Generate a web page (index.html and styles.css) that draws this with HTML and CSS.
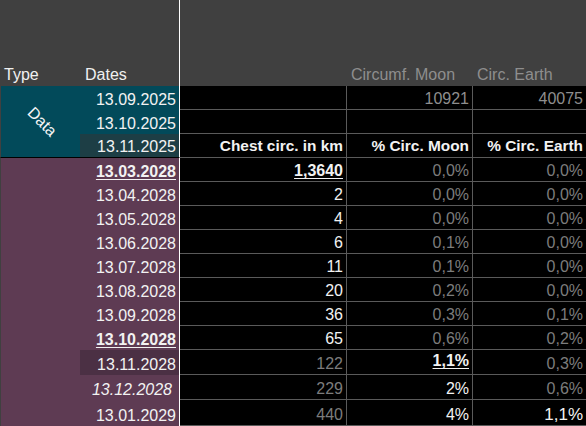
FILE: index.html
```html
<!DOCTYPE html>
<html>
<head>
<meta charset="utf-8">
<link rel="stylesheet" href="styles.css">
</head>
<body>
<div class="sheet">
  <div class="hd">Type</div>
  <div class="hd hd-date">Dates</div>
  <div class="hd"></div>
  <div class="hd hd-grey">Circumf. Moon</div>
  <div class="hd hd-grey">Circ. Earth</div>

  <div class="type type-data"><span class="rot">Data</span></div>
  <div class="type type-purple"></div>

  <div class="date teal">13.09.2025</div>
  <div class="v"></div>
  <div class="v grey">10921</div>
  <div class="v last grey">40075</div>

  <div class="date teal">13.10.2025</div>
  <div class="v"></div>
  <div class="v"></div>
  <div class="v last"></div>

  <div class="date teal-hi sep">13.11.2025</div>
  <div class="v bold">Chest circ. in km</div>
  <div class="v bold">% Circ. Moon</div>
  <div class="v last bold">% Circ. Earth</div>

  <div class="date purple strong">13.03.2028</div>
  <div class="v strong">1,3640</div>
  <div class="v dim">0,0%</div>
  <div class="v last dim">0,0%</div>

  <div class="date purple">13.04.2028</div>
  <div class="v">2</div>
  <div class="v dim">0,0%</div>
  <div class="v last dim">0,0%</div>

  <div class="date purple">13.05.2028</div>
  <div class="v">4</div>
  <div class="v dim">0,0%</div>
  <div class="v last dim">0,0%</div>

  <div class="date purple">13.06.2028</div>
  <div class="v">6</div>
  <div class="v dim">0,1%</div>
  <div class="v last dim">0,0%</div>

  <div class="date purple">13.07.2028</div>
  <div class="v">11</div>
  <div class="v dim">0,1%</div>
  <div class="v last dim">0,0%</div>

  <div class="date purple">13.08.2028</div>
  <div class="v">20</div>
  <div class="v dim">0,2%</div>
  <div class="v last dim">0,0%</div>

  <div class="date purple">13.09.2028</div>
  <div class="v">36</div>
  <div class="v dim">0,3%</div>
  <div class="v last dim">0,1%</div>

  <div class="date purple strong">13.10.2028</div>
  <div class="v">65</div>
  <div class="v dim">0,6%</div>
  <div class="v last dim">0,2%</div>

  <div class="date purple-hi">13.11.2028</div>
  <div class="v dim">122</div>
  <div class="v strong tall">1,1%</div>
  <div class="v last dim">0,3%</div>

  <div class="date purple italic">13.12.2028</div>
  <div class="v dim">229</div>
  <div class="v">2%</div>
  <div class="v last dim">0,6%</div>

  <div class="date purple">13.01.2029</div>
  <div class="v dim">440</div>
  <div class="v">4%</div>
  <div class="v last big">1,1%</div>
</div>
</body>
</html>
```
FILE: styles.css
```css
* { box-sizing: border-box; }
html, body { margin: 0; padding: 0; background: #000; }
body {
  width: 586px;
  height: 426px;
  overflow: hidden;
  font-family: "Liberation Sans", Arial, sans-serif;
  font-size: 16px;
  color: #f2f2f2;
}
.sheet {
  display: grid;
  grid-template-columns: 80px 100px 167px 126px 113px;
  grid-template-rows: 86px repeat(11, 24px) 25px 25px 26px;
  width: 586px;
  height: 426px;
}
.hd {
  background: #404040;
  display: flex;
  align-items: flex-end;
  padding: 0 3px 2px 4px;
  line-height: 18px;
  color: #f0f0f0;
}
.hd-date { border-right: 1px solid #ffffff; padding-left: 5px; }
.hd-grey { color: #8e8e8e; }

.type { grid-column: 1; border-left: 1px solid #404040; }
.type-data {
  grid-row: 2 / 5;
  background: #024a5a;
  border-bottom: 1px solid #000;
  display: flex;
  align-items: center;
  justify-content: center;
  padding-left: 2px;
  padding-top: 1px;
}
.rot {
  display: block;
  transform: rotate(45deg);
  color: #f5f5f5;
  line-height: 18px;
}
.type-purple { grid-row: 5 / 16; background: #5e3b53; }

.date, .v {
  display: flex;
  align-items: flex-end;
  justify-content: flex-end;
  line-height: 18px;
  padding: 0 3px 1px 3px;
  white-space: nowrap;
}
.date { grid-column: 2; border-right: 1px solid #ffffff; }
.teal { background: #024a5a; }
.teal-hi { background: #1d3e45; }
.sep { border-bottom: 1px solid #000; }
.purple { background: #5e3b53; }
.purple-hi { background: #4b3044; }
.italic { font-style: italic; padding-right: 7px; }
.strong { font-weight: bold; text-decoration: underline; text-underline-offset: 2px; }

.v {
  background: #000;
  border-bottom: 1px solid #5a5a5a;
  border-right: 1px solid #5a5a5a;
}
.v.last { border-right: none; }
.grey { color: #8e8e8e; }
.dim { color: #7c7c7c; }
.bold { font-weight: bold; font-size: 15.4px; padding-bottom: 2px; }
.tall { padding-bottom: 4px; }
.big { font-size: 17px; padding-bottom: 1px; }
```
